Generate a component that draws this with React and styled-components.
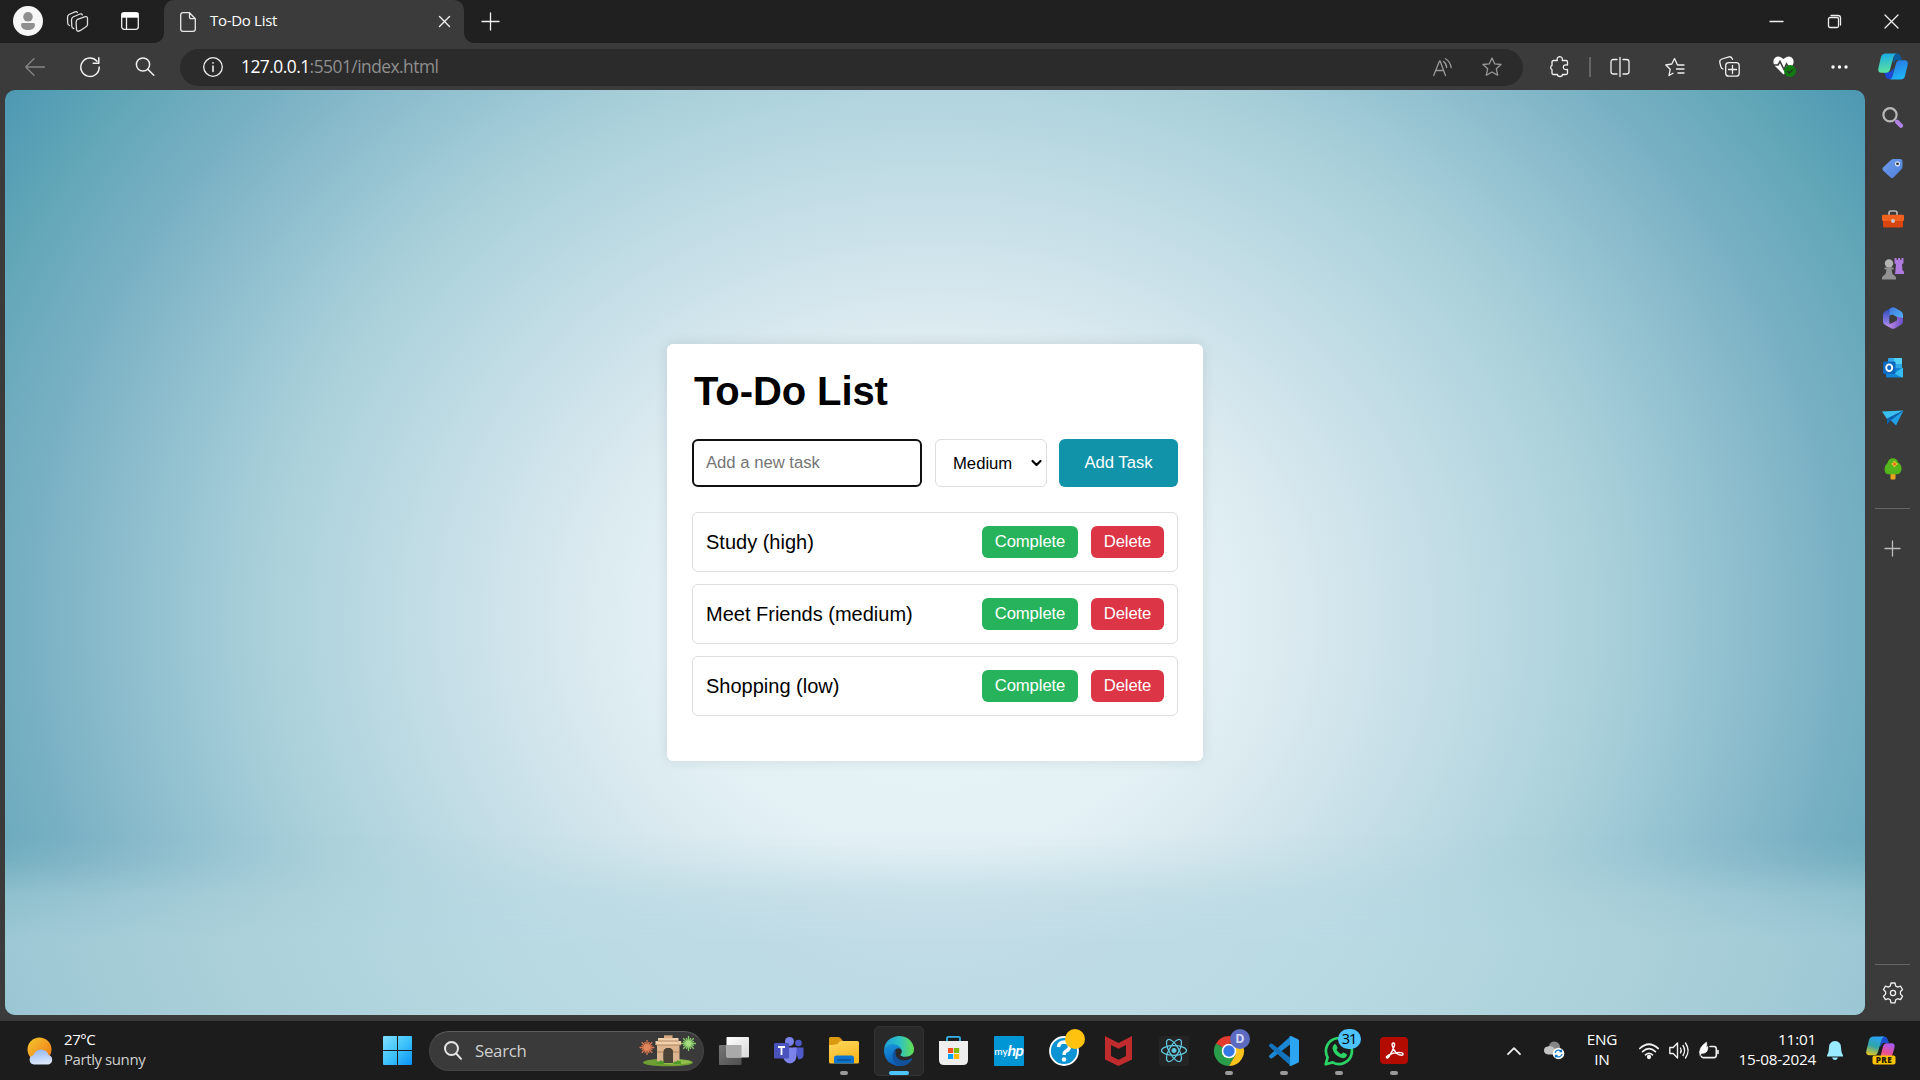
import React from "react";
import styled, { createGlobalStyle, css } from "styled-components";

const ui = `"Open Sans", "Noto Sans", sans-serif`;
const arial = `"Liberation Sans", Arial, sans-serif`;

const GlobalStyle = createGlobalStyle`
  * { box-sizing: border-box; }
  html, body { margin: 0; padding: 0; background: #1c1c1c; overflow: hidden; }
  svg { display: block; flex: none; overflow: visible; }
`;

const Desktop = styled.div`
  width: 1920px;
  height: 1080px;
  display: flex;
  flex-direction: column;
  font-family: ${ui};
  color: #fff;
  overflow: hidden;
`;

const Browser = styled.div`
  height: 1020px;
  display: flex;
  flex-direction: column;
  background: #3b3b3b;
`;

const TabStrip = styled.div`
  height: 43px;
  flex: none;
  display: flex;
  background: #202020;
`;

const StripTools = styled.div`
  width: 164px;
  display: flex;
  align-items: center;
  padding: 0 25px 1px 13px;
`;

const ToolGap = styled.div`
  width: ${(p) => p.$w}px;
`;

const Tab = styled.div`
  width: 300px;
  height: 43px;
  display: flex;
  align-items: center;
  padding: 0 14px 0 16px;
  background: #3b3b3b;
  border-radius: 10px 10px 0 0;
`;

const TabFoot = styled.div`
  width: 10px;
  height: 10px;
  align-self: flex-end;
  margin-left: ${(p) => (p.$side === "left" ? "-10px" : "0")};
  background: radial-gradient(
    circle at ${(p) => (p.$side === "left" ? "0 0" : "100% 0")},
    #202020 9.5px,
    #3b3b3b 10.3px
  );
`;

const TabTitle = styled.span`
  flex: 1;
  margin-left: 14px;
  font-size: 15px;
  letter-spacing: -0.3px;
  line-height: 20px;
  padding-bottom: 3px;
`;

const NewTab = styled.div`
  display: flex;
  align-items: center;
  padding: 0 0 1px 8px;
`;

const WindowControls = styled.div`
  margin-left: auto;
  display: flex;
  align-items: center;
  gap: 44.5px;
  padding-right: 22px;
`;

const Toolbar = styled.div`
  height: 47px;
  flex: none;
  display: flex;
  align-items: center;
  padding: 0 0 0 25px;
`;

const NavButtons = styled.div`
  width: 155px;
  display: flex;
  align-items: center;
  gap: 35px;
`;

const AddressBar = styled.div`
  width: 1343px;
  height: 37px;
  display: flex;
  align-items: center;
  margin-top: 1px;
  padding: 0 21px 0 23px;
  border-radius: 19px;
  background: #2b2b2b;
`;

const Url = styled.span`
  flex: 1;
  margin-left: 18px;
  font-size: 17.4px;
  letter-spacing: -0.53px;
  line-height: 24px;
  color: #8f8f8f;
  padding-bottom: 2px;
  b { font-weight: 400; color: #fff; }
`;

const BarIcons = styled.div`
  display: flex;
  align-items: center;
  gap: 30px;
`;

const ToolbarIcons = styled.div`
  display: flex;
  align-items: center;
  padding-left: 9px;
`;

const ToolSlot = styled.div`
  width: ${(p) => p.$w || 55}px;
  display: flex;
  justify-content: center;
`;

const Divider = styled.div`
  width: 2px;
  height: 20px;
  background: #666;
  margin: 0 1px 0 2px;
`;

const Body = styled.div`
  flex: 1;
  display: flex;
  padding: 0 0 5px 5px;
`;

const Page = styled.main`
  width: 1860px;
  height: 925px;
  position: relative;
  display: flex;
  flex-direction: column;
  align-items: center;
  padding-top: 254px;
  border-radius: 10px;
  overflow: hidden;
  background: radial-gradient(
    ellipse 1180px 1000px at 930px 530px,
    #e9f4f8 0%,
    #e3f1f5 23%,
    #d7e8ee 32%,
    #c7dfe8 41%,
    #b8d8e1 49%,
    #a9d0da 57%,
    #94c2d1 66%,
    #78b0c3 77%,
    #62a7b8 86%,
    #4b96b2 96%
  );
  &::before {
    content: "";
    position: absolute;
    inset: 745px 0 0 0;
    background: radial-gradient(
      ellipse 1150px 500px at 930px 80px,
      #c2dce7 0%,
      #b9dae3 35%,
      #acd1da 60%,
      #9fc9d5 78%,
      #92c0ce 92%
    );
    mask-image: linear-gradient(transparent 0, rgba(0, 0, 0, 0.2) 25px, rgba(0, 0, 0, 0.75) 60px, #000 105px);
  }
`;

const Card = styled.section`
  position: relative;
  width: 536px;
  height: 417px;
  padding: 24px 25px 25px;
  display: flex;
  flex-direction: column;
  background: #fff;
  border-radius: 6px;
  box-shadow: 0 0 13px rgba(0, 0, 0, 0.1);
  font-family: ${arial};
  color: #000;
`;

const Title = styled.h1`
  margin: 0 0 25px 2px;
  font-size: 40px;
  letter-spacing: -0.1px;
  line-height: 46px;
  font-weight: 700;
`;

const Form = styled.div`
  height: 48px;
  display: flex;
  margin-bottom: 25px;
  gap: 13px;
`;

const TaskInput = styled.input`
  width: 230px;
  padding: 0 12px;
  border: 2px solid #101010;
  border-radius: 6px;
  outline: none;
  font: 16.67px ${arial};
  &::placeholder { color: #757575; opacity: 1; }
`;

const Priority = styled.div`
  width: 112px;
  display: flex;
  align-items: center;
  justify-content: space-between;
  padding: 1px 4px 0 17px;
  border: 1px solid #ddd;
  border-radius: 6px;
  font-size: 16.67px;
`;

const SubmitButton = styled.button`
  width: 119px;
  margin-left: -1px;
  border: 0;
  padding: 0;
  border-radius: 6px;
  background: #1193aa;
  color: #fff;
  font: 16.67px ${arial};
`;

const TaskList = styled.ul`
  list-style: none;
  margin: 0;
  padding: 0;
  display: flex;
  flex-direction: column;
  gap: 12px;
`;

const Task = styled.li`
  height: 60px;
  display: flex;
  align-items: center;
  gap: 13px;
  padding: 0 13px;
  border: 1px solid #ddd;
  border-radius: 6px;
  font-size: 20px;
`;

const TaskName = styled.span`
  flex: 1;
`;

const ActionButton = styled.button`
  width: ${(p) => (p.$danger ? 73 : 96)}px;
  height: 32px;
  border: 0;
  padding: 0;
  border-radius: 6px;
  background: ${(p) => (p.$danger ? "#dc3545" : "#27b35c")};
  color: #fff;
  font: 16.67px ${arial};
  letter-spacing: -0.1px;
`;

const Sidebar = styled.aside`
  width: 55px;
  display: flex;
  flex-direction: column;
  align-items: center;
  padding: 3px 0 0 0;
`;

const SideSlot = styled.div`
  width: 40px;
  height: 50px;
  display: flex;
  align-items: center;
  justify-content: center;
`;

const SideRule = styled.div`
  width: 35px;
  height: 1px;
  background: #666;
  ${(p) =>
    p.$bottom
      ? css`margin: 0 0 3px;`
      : css`margin: 15px 0 14px;`}
`;

const SideEnd = styled.div`
  display: flex;
  flex-direction: column;
  align-items: center;
  margin-top: auto;
  margin-bottom: -3px;
`;

const Taskbar = styled.footer`
  height: 60px;
  display: flex;
  border-top: 1px solid #383838;
  background: #1c1c1c;
`;

const Weather = styled.div`
  width: 383px;
  display: flex;
  align-items: center;
  gap: 9px;
  padding-left: 27px;
`;

const WeatherInfo = styled.div`
  padding-bottom: 3px;
`;

const WeatherText = styled.div`
  font-size: 15px;
  line-height: 20px;
  letter-spacing: -0.42px;
  color: ${(p) => (p.$dim ? "#d0d0d0" : "#fff")};
`;

const StartButton = styled.div`
  width: 46px;
  display: flex;
  align-items: center;
`;

const SearchBox = styled.div`
  width: 275px;
  height: 40px;
  align-self: center;
  display: flex;
  align-items: center;
  padding: 0 7px 0 14px;
  border: 1px solid #454545;
  border-top-color: #5c5c5c;
  border-radius: 20px;
  background: #3a3a3a;
`;

const SearchLabel = styled.span`
  flex: 1;
  margin-left: 13px;
  font-size: 16.8px;
  letter-spacing: -0.25px;
  color: #d0d0d0;
`;

const Apps = styled.div`
  display: flex;
  align-items: center;
  padding-left: 2px;
`;

const AppSlot = styled.div`
  position: relative;
  width: 50px;
  height: 50px;
  margin: 0 2.5px;
  display: flex;
  align-items: center;
  justify-content: center;
  border-radius: 5px;
  border: 1px solid ${(p) => (p.$active ? "#333" : "transparent")};
  background: ${(p) => (p.$active ? "#292929" : "transparent")};
  &::after {
    content: "";
    display: ${(p) => (p.$running || p.$active ? "block" : "none")};
    position: absolute;
    bottom: 0;
    width: ${(p) => (p.$active ? 20 : 8)}px;
    height: 4px;
    border-radius: 2px;
    background: ${(p) => (p.$active ? "#4cc2ff" : "#9a9a9a")};
  }
`;

const Badge = styled.span`
  position: absolute;
  top: 2px;
  left: ${(p) => p.$left}px;
  width: ${(p) => p.$width || 20}px;
  height: 20px;
  display: flex;
  align-items: center;
  justify-content: center;
  border-radius: 10px;
  font-size: ${(p) => (p.$bold ? 12.5 : 14.5)}px;
  letter-spacing: -1px;
  font-weight: ${(p) => (p.$bold ? 700 : 400)};
  background: ${(p) => p.$bg};
  color: ${(p) => p.$fg || "#000"};
`;

const HpTile = styled.div`
  width: 30px;
  height: 30px;
  display: flex;
  align-items: center;
  justify-content: center;
  background: #0096d6;
  border-radius: 1px;
  font: 500 10px Lato, sans-serif;
  i { font: italic 700 14px "Liberation Sans", sans-serif; letter-spacing: -1px; }
`;

const Tray = styled.div`
  margin-left: auto;
  display: flex;
  align-items: center;
  padding-right: 24px;
`;

const TrayText = styled.div`
  width: ${(p) => p.$width}px;
  text-align: ${(p) => p.$align};
  font-size: 15.3px;
  line-height: 20px;
  letter-spacing: -0.22px;
  white-space: nowrap;
  padding-bottom: 3px;
`;

const TrayGap = styled.div`
  width: ${(p) => p.$w}px;
`;

const Line = ({ w, h, children, color = "#f0f0f0", sw = 1.3, ...rest }) => (
  <svg width={w} height={h} viewBox={`0 0 ${w} ${h}`} fill="none" stroke={color} strokeWidth={sw} strokeLinecap="round" strokeLinejoin="round" {...rest}>
    {children}
  </svg>
);

const Art = ({ w, h, children }) => (
  <svg width={w} height={h} viewBox={`0 0 ${w} ${h}`}>{children}</svg>
);

const Grad = ({ id, from, to, x2 = 1, y2 = 1 }) => (
  <linearGradient id={id} x1="0" y1="0" x2={x2} y2={y2}>
    <stop offset="0" stopColor={from} />
    <stop offset="1" stopColor={to} />
  </linearGradient>
);

const Avatar = () => (
  <Art w={30} h={30}>
    <circle cx="15" cy="15" r="15" fill="#f7f7f7" />
    <circle cx="15" cy="10.8" r="4.8" fill="#8f8f8f" />
    <path d="M8 18.5q0-1.5 1.5-1.5h11q1.5 0 1.5 1.5c0 3.8-3 5.5-7 5.5s-7-1.700-7-5.500z" fill="#8f8f8f" />
  </Art>
);

const WorkspacesIcon = () => (
  <Line w={21} h={21} color="#ddd">
    <path d="M10.500 8.300 17.500 5.800q3-.8 3 1.500v6.200q0 1.300-1.500 2.300l-6 3.900q-3 1.500-3.500-1l-.4-7.400q0-2 1.400-3z" />
    <path d="M6.800 17.500q-1.800-.3-2-2L4.500 9q0-2 1.500-3L13 3q1.800-.6 2.300 1" />
    <path d="M2.500 14.500Q.8 14 .7 12.200L.5 6.500q0-2 1.500-3L8 .8q1.800-.6 2.400.7" />
  </Line>
);

const TabActionsIcon = () => (
  <Line w={18} h={18}>
    <rect x=".7" y=".7" width="16.600" height="16.600" rx="2.500" />
    <path d="M1 1.500h16V5H1zM5.500 5v12" />
    <rect x="1" y="1" width="16" height="4" fill="#fff" stroke="none" />
  </Line>
);

const FileIcon = () => (
  <Line w={16} h={20} color="#e8e8e8">
    <path d="M3 .7h6.500l5.800 6V17q0 2.300-2.300 2.300H3Q.7 19.300.7 17V3Q.7.7 3 .7zM9.500.7V5q0 1.700 1.700 1.700h4" />
  </Line>
);

const CopilotIcon = () => (
  <Art w={30} h={27}>
    <defs>
      <Grad id="cpA" from="#17a9e8" to="#5be3a0" x2={0.1} />
      <Grad id="cpB" from="#2b6fe0" to="#1fb2f5" x2={0.4} />
    </defs>
    <path d="M16 .5h3q3 0 3.700 3L24 7h-6l-3 4z" fill="#0a5c9c" />
    <path d="M14 26h-3q-3 0-3.600-3L6 19h6l4-4z" fill="#1c49d8" />
    <path d="M7.500.500H19q-2.500 0-3.500 3.500L12 16.500Q11 19.700 8 19.700H3.500Q-.6 19.700.4 15L3 4Q4 .500 7.500.500z" fill="url(#cpA)" />
    <path d="M22.500 26.500H11q2.500 0 3.500-3.500L18 10.500Q19 7.300 22 7.300h4.500q4.100 0 3.100 4.700L27 23q-1 3.500-4.500 3.500z" fill="url(#cpB)" />
  </Art>
);

const CopilotPreIcon = () => (
  <Art w={30} h={29}>
    <defs>
      <linearGradient id="preA" x1=".5" y1="0" x2=".2" y2="1">
        <stop offset="0" stopColor="#2aa4f0" /><stop offset=".5" stopColor="#31a3a8" /><stop offset="1" stopColor="#e6c820" />
      </linearGradient>
      <linearGradient id="preB" x1=".7" y1="0" x2=".3" y2="1">
        <stop offset="0" stopColor="#a75af0" /><stop offset=".6" stopColor="#ef4f8e" /><stop offset="1" stopColor="#ff9a60" />
      </linearGradient>
    </defs>
    <path d="M15 .5h3q3 0 3.700 3L23 7h-6l-3 4z" fill="#1b4fc9" />
    <path d="M7.500.500H19q-2.500 0-3.500 3.500L12 16q-1 3.200-4 3.200H3.500q-4.100 0-3.100-4.700L3 4Q4 .500 7.500.500z" fill="url(#preA)" />
    <path d="M21 24H12q1.500 0 2.500-3.500L17 10.500q1-3.200 4-3.200h4.500q4.100 0 2.900 4.700L26 20z" fill="url(#preB)" />
    <rect x="6.500" y="19.500" width="23" height="9" rx="2" fill="#ffc400" />
    <text x="18" y="27" textAnchor="middle" fontSize="8.200" fontWeight="800" letterSpacing=".4" fontFamily="Open Sans, sans-serif" fill="#221a00">PRE</text>
  </Art>
);

const SideSearch = () => (
  <Art w={22} h={23}>
    <circle cx="8" cy="7.800" r="6.600" fill="none" stroke="#b8b8b8" strokeWidth="2.200" />
    <path d="m15 14.800 4 4" stroke="#b283e6" strokeWidth="4.200" strokeLinecap="round" />
  </Art>
);
const SideTag = () => (
  <Art w={21} h={21}>
    <defs><Grad id="tag" from="#6f9df0" to="#4e7ed8" /></defs>
    <path d="M11.500 1h6.500q2.500 0 2.500 2.500V9q0 1.200-.8 2l-8 8.200q-1.700 1.700-3.400 0L1 12.500q-1.300-1.500 0-3L9 2q1-1 2.500-1z" fill="url(#tag)" />
    <circle cx="15.500" cy="5.800" r="2" fill="#333" stroke="#dce8ff" strokeWidth="1.200" />
  </Art>
);
const SideToolbox = () => (
  <Art w={22} h={17}>
    <path d="M7 6V3q0-2 2-2h4q2 0 2 2v3" fill="none" stroke="#b5b5b5" strokeWidth="1.700" />
    <rect x="1" y="8" width="20" height="9.500" rx="1.500" fill="#d9440f" />
    <rect x="0" y="4.800" width="22" height="6.200" rx="1.200" fill="#f0601f" />
    <circle cx="11" cy="11" r="2" fill="#c9c9c9" />
  </Art>
);
const SideChess = () => (
  <Art w={22} h={23}>
    <path d="M12.500 1h2v1.700h1.500V1h2v1.700h1.500V1h2v5l-1.500 1.500.5 5.500 1.500 2v2h-9l.5-4 .5-5.500-1.500-1.500z" fill="#b07be0" />
    <circle cx="7" cy="6.500" r="4.200" fill="#b3b3b3" />
    <path d="M2.500 10.500h9v2H9.500l1 4.500 2.500 2q1.500 1 1 3.500H0q-.5-2.500 1-3.500l2.500-2 1-4.500h-2z" fill="#929292" />
  </Art>
);
const SideM365 = () => (
  <Art w={20} h={22}>
    <defs><Grad id="m1" from="#2346b4" to="#a889f0" x2={0} /><Grad id="m2" from="#3f78df" to="#54b7f4" /><Grad id="m3" from="#cf96ef" to="#6a4fc5" x2={1} y2={0} /></defs>
    <path d="M9 .300 2 4.300Q0 5.500 0 8v7q0 1.500 1.500 2.500L6.500 19.500V8L9.500 5.500z" fill="url(#m1)" />
    <path d="M8 1Q10-.3 12 .8L18 4.300q2 1.200 2 3.700v6l-6-3.800-4.500-2.700L6.500 8.500V3.500Q6.500 1.800 8 1z" fill="url(#m2)" />
    <path d="M20 11v3.500q0 2-1.500 3L12 21.200q-2 1.200-4 0L2 17.800q3 .7 5-.8l7-4V9.500z" fill="url(#m3)" />
    <path d="M6.600 9.800 9.800 8l4 2.300v2.900L9 15.900l-2.400-1.300z" fill="#3b3b3b" />
  </Art>
);
const SideOutlook = () => (
  <Art w={20} h={20}>
    <rect x="5" y="0" width="14" height="11" rx="1" fill="#2fa8e8" />
    <path d="M11 0h8v6h-8z" fill="#50d0f5" />
    <path d="M3 10h17v8q0 1.500-1.500 1.500h-14Q3 19.500 3 18z" fill="#1286d6" />
    <path d="m20 9.500-9 6 8 4q1 0 1-1.500z" fill="#35bdf2" />
    <rect x="0" y="3.500" width="12.500" height="12.500" rx="1.200" fill="#0a68c0" />
    <ellipse cx="6.200" cy="9.700" rx="3" ry="3.300" fill="none" stroke="#fff" strokeWidth="1.900" />
  </Art>
);
const SidePlane = () => (
  <Art w={22} h={16}>
    <path d="M0 1.500 21.500.5 5 9z" fill="#3cc0f2" />
    <path d="M21.500.5 14 15.500 8.500 10z" fill="#209fe5" />
    <path d="M21.500.5 5 8.500v6l3.500-4z" fill="#0b62ae" />
  </Art>
);
const SideTree = () => (
  <Art w={18} h={21}>
    <rect x="6.500" y="14" width="5" height="7.500" rx="1" fill="#e9a321" />
    <path d="M9 .3q4 0 5 4 4 3 3.500 7-.5 5-5 5h-8q-4 0-4-5Q.500 7.500 3.500 5 4.500.3 9 .3z" fill="#54b51c" />
    <path d="M10.500 3.300v5.500M7.800 6h5.500" stroke="#ffc12b" strokeWidth="2.200" />
    <circle cx="10.500" cy="6" r="1.200" fill="#e8501c" />
  </Art>
);

const WeatherIcon = () => (
  <Art w={28} h={28}>
    <defs><Grad id="sun" from="#f5c730" to="#ee7412" /><Grad id="cloud" from="#8fb4f2" to="#dbe7fb" x2={0.2} /></defs>
    <circle cx="12.500" cy="12.500" r="12" fill="url(#sun)" />
    <path d="M7 27.500a4.700 4.700 0 0 1-.6-9.300Q8 13 14 12.500q6 .3 7.500 5.500a4.900 4.900 0 0 1 0 9.500z" fill="url(#cloud)" />
  </Art>
);
const WindowsLogo = () => (
  <Art w={29} h={29}>
    <defs><linearGradient id="win" gradientUnits="userSpaceOnUse" x1="0" y1="0" x2="29" y2="29"><stop offset="0" stopColor="#80e0ff" /><stop offset=".5" stopColor="#3fc3fb" /><stop offset="1" stopColor="#0a93f5" /></linearGradient></defs>
    <path d="M1 0h13v14H0V1q0-1 1-1zM15 0h13q1 0 1 1v13H15zM0 15h14v14H1q-1 0-1-1zM15 15h14v13q0 1-1 1H15z" fill="url(#win)" />
  </Art>
);

const spikes = (cx, cy, r) =>
  Array.from({ length: 16 }, (_, i) => {
    const a = (i * Math.PI) / 8;
    const k = i % 2 ? r * 0.78 : r;
    return `M${cx} ${cy}l${(Math.cos(a) * k).toFixed(1)} ${(Math.sin(a) * k).toFixed(1)}`;
  }).join("");

const GateIllustration = () => (
  <Art w={56} h={31}>
    <ellipse cx="28" cy="27.500" rx="25" ry="3.800" fill="#6f9e35" />
    <ellipse cx="34" cy="27" rx="17" ry="2.400" fill="#93bd4b" />
    <path d={spikes(7, 12.500, 7.500)} stroke="#d9774e" strokeWidth="1.300" />
    <circle cx="7" cy="12.500" r="3.200" fill="#e0855c" />
    <path d={spikes(48.500, 8.500, 7.500)} stroke="#87c867" strokeWidth="1.300" />
    <circle cx="48.500" cy="8.500" r="3" fill="#a6db80" />
    <path d="M17 9h22.500v19h-6.500V17.500q0-4.500-4.700-4.500t-4.800 4.500V28H17z" fill="#dcb58e" />
    <path d="M23.500 28V17.500q0-4.500 4.800-4.500t4.700 4.500V28z" fill="#4a4336" />
    <path d="M15.500 6h25.500v4H15.500zM18 3h20.500v3H18z" fill="#f0d0aa" />
    <path d="M24 .300h8.500v3H24z" fill="#d8a880" />
    <path d="M16 10h25M17 17h6.500M33 17h6.500M18 6h20.500" stroke="#a97f5c" strokeWidth=".9" />
    <path d="M16 29q1-4 3-2 1-3 3-1 2-1 2 3zM33 29q1-4 3-2 1-3 3-1 2-1 2 3z" fill="#4f9a28" />
  </Art>
);

const TaskViewIcon = () => (
  <Art w={30} h={28}>
    <defs><Grad id="tv" from="#fff" to="#d8d8d8" /><Grad id="tv2" from="#777" to="#4e4e4e" /></defs>
    <rect x="0" y="8" width="22.500" height="20" rx="1" fill="url(#tv2)" />
    <rect x="7.500" y="0" width="22.500" height="20.500" rx="1" fill="url(#tv)" />
    <path d="M7.500 8h15v12.500H8.500q-1 0-1-1z" fill="#aaa" />
  </Art>
);
const TeamsIcon = () => (
  <Art w={30} h={27}>
    <circle cx="24.500" cy="6" r="3.300" fill="#5059c9" />
    <path d="M20 10.500h9.500v7.500q0 4-5 4.500z" fill="#5059c9" />
    <circle cx="15.500" cy="4.500" r="4.500" fill="#7b83eb" />
    <path d="M9 10.500h13.500V19q-.5 7-6.700 7.500Q10 26 9 19z" fill="#7b83eb" />
    <rect x="0" y="6" width="15" height="15.500" rx="1.300" fill="#4a52bd" />
    <path d="M4 10h7M7.500 10v8" stroke="#fff" strokeWidth="1.800" />
  </Art>
);
const ExplorerIcon = () => (
  <Art w={30} h={27}>
    <defs><Grad id="fold" from="#ffd75e" to="#f8b920" x2={0.4} /></defs>
    <path d="M0 1.500Q0 0 1.500 0H9q1.500 0 2.200.8L14 4v5H0z" fill="#dc9a10" />
    <path d="M0 8q8 0 9.500-2L11 4h17.500Q30 4 30 5.500V25q0 1.500-1.500 1.500h-27Q0 26.500 0 25z" fill="url(#fold)" />
    <path d="M5 26.500V21q0-2.500 2.500-2.500h15Q25 18.500 25 21v5.500z" fill="#0f74cd" />
    <path d="M9 23h12" stroke="#0a4d94" strokeWidth="1.500" strokeLinecap="round" />
  </Art>
);
const EdgeIcon = () => (
  <Art w={30} h={30}>
    <defs>
      <linearGradient id="eg1" x1="0" y1=".5" x2="1" y2=".5"><stop offset="0" stopColor="#219fd9" /><stop offset=".5" stopColor="#2bc1c8" /><stop offset="1" stopColor="#66e04d" /></linearGradient>
      <Grad id="eg2" from="#1798e0" to="#0d5ab5" x2={0.3} />
    </defs>
    <path d="M0 14Q1 2 14 0q13-.4 16 12 .5 8-8 8.800-5 0-5.700-1.800 2.500-3 1-5.500Q12 7 4.500 9.500 1.500 11 0 14z" fill="url(#eg1)" />
    <path d="M0 14q4-7 11-5.500 5 1 6.500 5-4-2.500-6.800.5Q8 18 11.500 23.500 15 29 21.500 28.500 17 31 11.500 29.500 0 26 0 14z" fill="url(#eg2)" />
    <path d="M12 13.300Q10 21 16 23.800q5 2 11-1.300 2-.5 1 1.300Q24 30 17 30 9 28 8.500 20q0-4 3.500-6.700z" fill="#12529c" />
  </Art>
);
const StoreIcon = () => (
  <Art w={29} h={29}>
    <path d="M8 7V2q0-1.200 1.200-1.200h10.600Q21 .8 21 2v5" fill="none" stroke="#35b2e8" strokeWidth="1.800" />
    <path d="M0 5h29v19q0 5-5 5H5q-5 0-5-5z" fill="#efefef" />
    <path d="M9 12h5.200v5H9z" fill="#f25022" /><path d="M15 12h5.200v5H15z" fill="#7fba00" />
    <path d="M9 18h5.200v5H9z" fill="#00a4ef" /><path d="M15 18h5.200v5H15z" fill="#ffb900" />
  </Art>
);
const HelpIcon = () => (
  <Art w={30} h={30}>
    <circle cx="15" cy="15" r="14" fill="#0c93d4" stroke="#fff" strokeWidth="1.800" />
    <path d="M9.500 11q.5-5 5.700-5 5.300.3 5.300 4.700 0 2.500-2.800 4-2.700 1.300-2.700 4.300" fill="none" stroke="#fff" strokeWidth="3.400" />
    <circle cx="15" cy="23.500" r="2.200" fill="#fff" />
  </Art>
);
const McAfeeIcon = () => (
  <Art w={27} h={30}>
    <path d="M0 0 13.500 7 27 0v23.500L13.500 30 0 23.500zM6 9v11l7.500 3.700L21 20V9l-7.500 3.800z" fill="#c02b2e" fillRule="evenodd" />
  </Art>
);
const ReactIcon = () => (
  <Art w={30} h={30}>
    <rect width="30" height="30" rx="3" fill="#242424" />
    <g fill="none" stroke="#61c9e0" strokeWidth="1.200" transform="translate(15 14.500)">
      <ellipse rx="12.500" ry="4.800" />
      <ellipse rx="12.500" ry="4.800" transform="rotate(60)" />
      <ellipse rx="12.500" ry="4.800" transform="rotate(120)" />
      <circle r="2" fill="#61c9e0" />
    </g>
  </Art>
);
const ChromeIcon = () => (
  <Art w={30} h={30}>
    <path d="M15 15 2 7.500A15 15 0 0 1 28 7.500H15z" fill="#e33b2e" />
    <path d="M2 7.500A15 15 0 0 0 15 30l6.500-11.300L15 15z" fill="#2a9d4b" />
    <path d="M28 7.500A15 15 0 0 1 15 30l6.500-11.300L20 7.500z" fill="#fcc31e" />
    <circle cx="15" cy="15" r="7.300" fill="#fff" />
    <circle cx="15" cy="15" r="5.700" fill="#3478e5" />
  </Art>
);
const CodeIcon = () => (
  <Art w={30} h={30}>
    <path d="M22 7.800 3.200 22.300q-1 .6-1.900-.1l-1-.9q-.8-.9 0-1.800L21.500.3z" fill="#1b88d4" />
    <path d="M22 22.200 3.200 7.700q-1-.6-1.900.1l-1 .9q-.8.900 0 1.800L21.500 29.700z" fill="#1374bd" />
    <path d="M22 0l7 3.300q1 .5 1 1.500v20.400q0 1-1 1.500L22 30q-1 .3-1.700-.5.700.3.700-1V1.700q0-1.300-.7-1.200Q21-.3 22 0z" fill="#2ba5f2" />
  </Art>
);
const WhatsappIcon = () => (
  <Art w={30} h={30}>
    <path d="M1.700 28.300 3.600 21.400A13 13 0 1 1 8.600 26.400z" fill="none" stroke="#2bd366" strokeWidth="2.700" strokeLinejoin="round" />
    <path d="M10 8.500q1-1 2 0l1.500 3q.3.800-1 2.300 1.500 3 4.800 4.500 1.500-2 2.200-1.800l3 1.500q.8.500.2 2-1.200 2.300-4 2.200Q10 20 8.500 12.500q0-2.500 1.500-4z" fill="#2bd366" />
  </Art>
);
const AcrobatIcon = () => (
  <Art w={28} h={27}>
    <rect width="28" height="27" rx="4" fill="#b30b00" />
    <path d="M13.500 6q-1.800 0-1.300 2.500 1 4.500 4.300 7.700 2 1.900 4.800 2 2 0 1.700-1.300-.5-1.500-4-1.500-6 .2-10.500 2.800-2.500 1.500-2 2.500.8 1.200 2.500-1.200Q12 15.500 14.500 8.500 14.800 6 13.500 6z" fill="none" stroke="#fff" strokeWidth="1.400" />
  </Art>
);

const SyncCloudIcon = () => (
  <Art w={20} h={19}>
    <path d="M5 4Q8-.8 12.500 1q4 1.500 3.500 6.500L8 12z" fill="#858585" />
    <path d="M4 13.500Q0 13 0 9.500 0 6 3.500 5.500 8 4 11 8q1 5.500-2 5.500z" fill="#c4c4c4" />
    <circle cx="14.500" cy="12.500" r="5.800" fill="#fff" />
    <path d="M11 12a3.600 3.600 0 0 1 6.400-1.500M18 13a3.600 3.600 0 0 1-6.400 1.500M17.500 8.500v2.200h-2M11.500 16.500v-2.200h2" fill="none" stroke="#1177d1" strokeWidth="1.300" />
  </Art>
);

const sideItems = [SideSearch, SideTag, SideToolbox, SideChess, SideM365, SideOutlook, SidePlane, SideTree];

const tasks = ["Study (high)", "Meet Friends (medium)", "Shopping (low)"];

const apps = [
  { icon: <TaskViewIcon /> },
  { icon: <TeamsIcon /> },
  { icon: <ExplorerIcon />, running: true },
  { icon: <EdgeIcon />, active: true },
  { icon: <StoreIcon /> },
  { icon: <HpTile>my<i>hp</i></HpTile> },
  { icon: <HelpIcon />, badge: <Badge $left={25} $bg="#ffc20e" /> },
  { icon: <McAfeeIcon /> },
  { icon: <ReactIcon /> },
  { icon: <ChromeIcon />, running: true, badge: <Badge $left={25} $bg="#5c6bc0" $fg="#d5daf5" $bold>D</Badge> },
  { icon: <CodeIcon />, running: true },
  { icon: <WhatsappIcon />, running: true, badge: <Badge $left={23} $width={23} $bg="#4cc2ff">31</Badge> },
  { icon: <AcrobatIcon />, running: true },
];

const star = "M10 1 12.700 6.800 19 7.500 14.300 11.800 15.700 18.200 10 15 4.300 18.200 5.700 11.800 1 7.500 7.300 6.800z";

export default function App() {
  return (
    <Desktop>
      <GlobalStyle />
      <Browser>
        <TabStrip>
          <StripTools>
            <Avatar />
            <ToolGap $w={24} />
            <WorkspacesIcon />
            <ToolGap $w={33} />
            <TabActionsIcon />
          </StripTools>
          <TabFoot $side="left" />
          <Tab>
            <FileIcon />
            <TabTitle>To-Do List</TabTitle>
            <Line w={11} h={11} sw={1.4}><path d="m.5.500 10 10m0-10-10 10" /></Line>
          </Tab>
          <TabFoot $side="right" />
          <NewTab>
            <Line w={17} h={17}><path d="M8.500 0v17M0 8.500h17" /></Line>
          </NewTab>
          <WindowControls>
            <Line w={13} h={13}><path d="M0 6.500h13" /></Line>
            <Line w={13} h={13}><rect x=".5" y="2.500" width="10" height="10" rx="1.500" /><path d="M3 .5h7q2.500 0 2.500 2.500v7" /></Line>
            <Line w={13} h={13}><path d="m0 0 13 13M13 0 0 13" /></Line>
          </WindowControls>
        </TabStrip>
        <Toolbar>
          <NavButtons>
            <Line w={20} h={18} color="#858585"><path d="M19.500 9H.7M9 .7.700 9 9 17.300" /></Line>
            <Line w={20} h={20} sw={1.500}><path d="M17 4.300A9.200 9.200 0 1 0 19.200 10M18.800.8v5.500h-5.600" /></Line>
            <Line w={19} h={19} sw={1.500}><circle cx="8" cy="7.500" r="6.600" /><path d="m12.800 12.300 6 6" /></Line>
          </NavButtons>
          <AddressBar>
            <Line w={20} h={20}><circle cx="10" cy="10" r="9.300" /><path d="M10 9v5.500M10 5.800v.3" strokeWidth="1.600" /></Line>
            <Url><b>127.0.0.1</b>:5501/index.html</Url>
            <BarIcons>
              <Line w={19} h={19} color="#999"><path d="M.7 17.500 6.500 3h.6l5.400 14.500M3 12.500h7.700M10.500 3.500q3 2.300 3.200 6M12.500.7q4.800 2.800 5.700 9" /></Line>
              <Line w={20} h={20} color="#999"><path d={star} /></Line>
            </BarIcons>
          </AddressBar>
          <ToolbarIcons>
            <ToolSlot>
              <Line w={20} h={21}><path d="M3.500 4.500h3.800Q6.500 1 9.700.7q3.300.2 2.600 3.800H16q1.500 0 1.500 1.500v3q-4-.7-4.200 2.200.2 3 4.200 2.300V17q0 1.500-1.500 1.500h-3.500q0 2-2.500 2t-2.600-2H3.500Q2 18.500 2 17v-3.500Q.6 13 .7 11.500T2 9.400V6q0-1.500 1.500-1.500z" /></Line>
            </ToolSlot>
            <Divider />
            <ToolSlot>
              <Line w={20} h={20}><path d="M7 2.500H3.500Q1 2.500 1 5v9.500Q1 17 3.500 17H7M13 2.500h3.500Q19 2.500 19 5v9.500q0 2.500-2.500 2.500H13M10 .5v19" /></Line>
            </ToolSlot>
            <ToolSlot>
              <Line w={20} h={20}><path d="M19 8h-6.500L9.500 1.500 6.800 7 .8 8l4.400 4.300L4 18.500l4-2.200M11.500 12H19M13 16h6" /></Line>
            </ToolSlot>
            <ToolSlot>
              <Line w={21} h={21}><rect x="6.700" y="6.700" width="13.500" height="13.500" rx="3" /><path d="M13.500 9.500v8M9.500 13.500h8M4 13Q2.500 12.500 2 11L.8 6.500Q.3 3.800 3 3L10 .8q2.500-.5 3.500 2.500" /></Line>
            </ToolSlot>
            <ToolSlot>
              <Art w={23} h={21}>
                <path d="M10.500 18.500 1.500 9.500Q-1 5 2 1.800 6-1.300 10.500 3 15-1.300 19 1.800 22 5 19.500 9.500z" fill="#fff" />
                <path d="M0 9h5l2-3.500 4 8 2.500-5.500 1.500 2.500h6" fill="none" stroke="#3b3b3b" strokeWidth="1.600" />
                <circle cx="17" cy="15" r="6" fill="#107c10" />
                <path d="m14.300 15 2 2 3.400-3.600" fill="none" stroke="#243424" strokeWidth="1.400" />
              </Art>
            </ToolSlot>
            <ToolSlot>
              <Art w={17} h={4}><circle cx="2" cy="2" r="1.700" fill="#fff" /><circle cx="8.500" cy="2" r="1.700" fill="#fff" /><circle cx="15" cy="2" r="1.700" fill="#fff" /></Art>
            </ToolSlot>
            <ToolSlot $w={51}><CopilotIcon /></ToolSlot>
          </ToolbarIcons>
        </Toolbar>
        <Body>
          <Page>
            <Card>
              <Title>To-Do List</Title>
              <Form>
                <TaskInput placeholder="Add a new task" />
                <Priority>
                  <span>Medium</span>
                  <Line w={11} h={7} color="#000" sw={2.200}><path d="M1.500 1 5.500 5 9.500 1" /></Line>
                </Priority>
                <SubmitButton>Add Task</SubmitButton>
              </Form>
              <TaskList>
                {tasks.map((name) => (
                  <Task key={name}>
                    <TaskName>{name}</TaskName>
                    <ActionButton>Complete</ActionButton>
                    <ActionButton $danger>Delete</ActionButton>
                  </Task>
                ))}
              </TaskList>
            </Card>
          </Page>
          <Sidebar>
            {sideItems.map((Icon, i) => (
              <SideSlot key={i}><Icon /></SideSlot>
            ))}
            <SideRule />
            <SideSlot><Line w={15} h={15} color="#bbb"><path d="M7.500 0v15M0 7.500h15" /></Line></SideSlot>
            <SideEnd>
              <SideRule $bottom />
              <SideSlot>
                <Line w={22} h={22}>
                  <path d="M9 1h4l.7 3 2 1.100 2.800-.9 2 3.300-2.100 2.200v2.400l2.100 2.200-2 3.300-2.800-.9-2 1.100-.7 3H9l-.7-3-2-1.100-2.800.9-2-3.300 2.100-2.200V9.700L1.500 7.500l2-3.300 2.800.9 2-1.100z" />
                  <circle cx="11" cy="11" r="2.600" />
                </Line>
              </SideSlot>
            </SideEnd>
          </Sidebar>
        </Body>
      </Browser>
      <Taskbar>
        <Weather>
          <WeatherIcon />
          <WeatherInfo>
            <WeatherText>27°C</WeatherText>
            <WeatherText $dim>Partly sunny</WeatherText>
          </WeatherInfo>
        </Weather>
        <StartButton><WindowsLogo /></StartButton>
        <SearchBox>
          <Line w={18} h={19} color="#e6e6e6" sw={2}><circle cx="7.500" cy="7.500" r="6.500" fill="#4a4a4a" /><path d="m12.200 12.500 4.800 5.300" /></Line>
          <SearchLabel>Search</SearchLabel>
          <GateIllustration />
        </SearchBox>
        <Apps>
          {apps.map((app, i) => (
            <AppSlot key={i} $active={app.active} $running={app.running}>
              {app.icon}
              {app.badge}
            </AppSlot>
          ))}
        </Apps>
        <Tray>
          <Line w={14} h={8} sw={1.800}><path d="M1 7.200 7 1.200l6 6" /></Line>
          <TrayGap $w={23} />
          <SyncCloudIcon />
          <TrayGap $w={19} />
          <TrayText $width={38} $align="center">ENG<br />IN</TrayText>
          <TrayGap $w={18} />
          <Line w={20} h={16} sw={1.700}>
            <path d="M.8 5.500q9-8.500 18.400 0M3.600 8.700q6.400-6 12.800 0M6.500 11.800q3.500-3 7 0" />
            <circle cx="10" cy="14" r="1.300" fill="#fff" />
          </Line>
          <TrayGap $w={10} />
          <Line w={20} h={17} sw={1.400}>
            <path d="M.8 5.500h3.400L8.500 1v15L4.200 11.500H.8zM11.500 6q1.500 2.500 0 5M14 3.500q3.200 5 0 10M16.500 1q5.200 7.500 0 15" />
          </Line>
          <TrayGap $w={10} />
          <Line w={20} h={17} sw={1.600}>
            <path d="M11 4.500h4q2.300 0 2.300 2.300v6.500q0 2.300-2.300 2.300H4.500q-1.500 0-2.200-1.300M19 8.500v3" />
            <path d="M1 13.500Q-1.500 6 7.500 0q1 3-.5 5.500 1-1 2-1Q9 12 2.500 11.500z" fill="#fff" stroke="#fff" strokeWidth=".5" />
          </Line>
          <TrayGap $w={17} />
          <TrayText $width={80} $align="right">11:01<br />15-08-2024</TrayText>
          <TrayGap $w={11} />
          <Art w={16} h={19}>
            <path d="M8 0q6 .5 6 6.500 0 5 2 8v1H0v-1q2-3 2-8Q2 .5 8 0zM5 16.500h6q-1 2.500-3 2.500t-3-2.500z" fill="#99ebff" />
          </Art>
          <TrayGap $w={23} />
          <CopilotPreIcon />
        </Tray>
      </Taskbar>
    </Desktop>
  );
}
